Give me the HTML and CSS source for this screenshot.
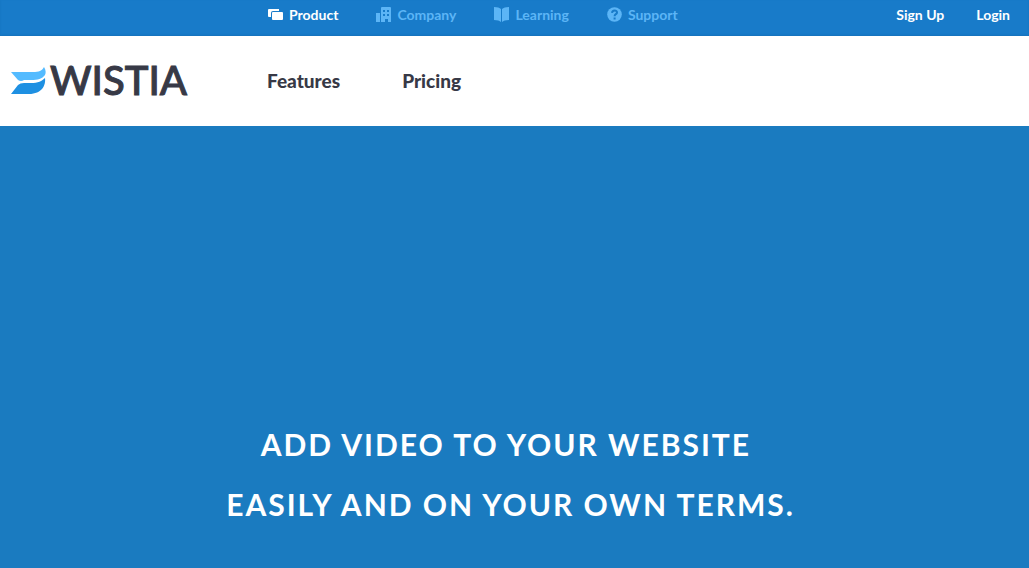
FILE: index.html
```html
<!doctype html>
<html lang="en">
<head>
    <meta charset="UTF-8" />
    <meta name="viewport" content="width=device-width, initial-scale=1" />
    <title>Wistia</title>
    <link rel="stylesheet" href="styles.css">
</head>
<body>
<div class="topbar">
    <nav class="sections">
        <a class="section active" href="#product">
            <svg width="16" height="16" viewBox="-1 0 16 16"><path d="M1 2h10v2H5Q3 4 3 6v4H1Q0 10 0 9V3Q0 2 1 2z"/><path d="M5 5h9q1 0 1 1v6q0 1-1 1H5q-1 0-1-1V6q0-1 1-1z"/></svg>
            <span>Product</span>
        </a>
        <a class="section" href="#company">
            <svg width="16" height="16" viewBox="-1 0 16 16"><path d="M0 6h4v9H0z"/><path fill-rule="evenodd" d="M6 0h8q1 0 1 1v14h-3v-3H9v3H5V1q0-1 1-1zM7 3v2h2V3zM11 3v2h2V3zM7 7v2h2V7zM11 7v2h2V7z"/></svg>
            <span>Company</span>
        </a>
        <a class="section" href="#learning">
            <svg width="16" height="16" viewBox="-1 0 16 16"><path d="M0 0q5 0 7 2v13q-2-2-7-2z"/><path d="M15 0q-5 0-7 2v13q2-2 7-2z"/></svg>
            <span>Learning</span>
        </a>
        <a class="section" href="#support">
            <svg width="16" height="16" viewBox="-1 0 16 16"><circle cx="7.500" cy="7.500" r="7.300"/><path class="mark" d="M5 5.900C5.200 2.700 10.200 2.700 10 5.600C9.900 7.300 7.600 7.100 7.600 9.200M7.600 10.500v2"/></svg>
            <span>Support</span>
        </a>
    </nav>
    <nav class="account">
        <a href="#signup">Sign Up</a>
        <a href="#login">Login</a>
    </nav>
</div>
<header class="header">
    <a class="logo" href="#home">
        <svg width="36" height="28" viewBox="0 0 36 28">
            <path fill="#54bbff" d="M0 5H22C28 5 31 4 33 0C35 3 35 6 34 8C31 12 27 13 20 13H13Q10 15 7 13z"/>
            <path fill="#1e90e2" d="M0 27L7 18Q9 16 13 16H20C27 16 31 14 34 11C35 18 31 27 18 27z"/>
        </svg>
        <span class="wordmark">WISTIA</span>
    </a>
    <nav class="menu">
        <a href="#features">Features</a>
        <a href="#pricing">Pricing</a>
    </nav>
</header>
<main class="hero">
    <h1>Add video to your website&nbsp;<br />easily and on your own terms.</h1>
</main>
</body>
</html>
```

FILE: styles.css
```css
:root {
    --side: 267px;
}
html,body {
    min-height: 100vh;
    padding: 0;
    margin: 0;
}
body {
    background: white;
    display: flex;
    flex-direction: column;
    font-family: Lato, "Open Sans", sans-serif;
}
a {
    color: inherit;
    text-decoration: none;
}
.topbar {
    align-items: center;
    background: #187bc9;
    box-sizing: border-box;
    box-shadow: inset 0 -1px 2px #1673bc;
    color: white;
    display: flex;
    font-size: 14px;
    font-weight: 700;
    height: 36px;
    justify-content: space-between;
    line-height: 20px;
    padding: 0 19px 6px var(--side);
}
.sections {
    display: flex;
    gap: 37px;
}
.section {
    align-items: center;
    color: #5cb5f6;
    display: flex;
    gap: 6px;
}
.section svg {
    fill: currentColor;
}
.section .mark {
    fill: none;
    stroke: #187bc9;
    stroke-width: 2;
}
.active {
    color: white;
}
.account {
    display: flex;
    gap: 32px;
}
.header {
    align-items: center;
    color: #373946;
    display: flex;
    height: 90px;
}
.logo {
    align-items: center;
    box-sizing: border-box;
    display: flex;
    font-size: 40px;
    font-weight: 500;
    gap: 3px;
    line-height: 48px;
    padding-left: 11px;
    width: var(--side);
}
.wordmark {
    -webkit-text-stroke: 1px currentColor;
    margin-bottom: 2px;
}
.menu {
    display: flex;
    font-size: 19px;
    font-weight: 900;
    gap: 62px;
    line-height: 24px;
}
.hero {
    background: #1a7bc0;
    color: white;
    flex: 1;
    padding: 288px 8px 32px 0;
    text-align: center;
}
h1 {
    font-size: 30px;
    font-weight: 700;
    letter-spacing: 2px;
    line-height: 60px;
    margin: 0;
    text-transform: uppercase;
}
```
